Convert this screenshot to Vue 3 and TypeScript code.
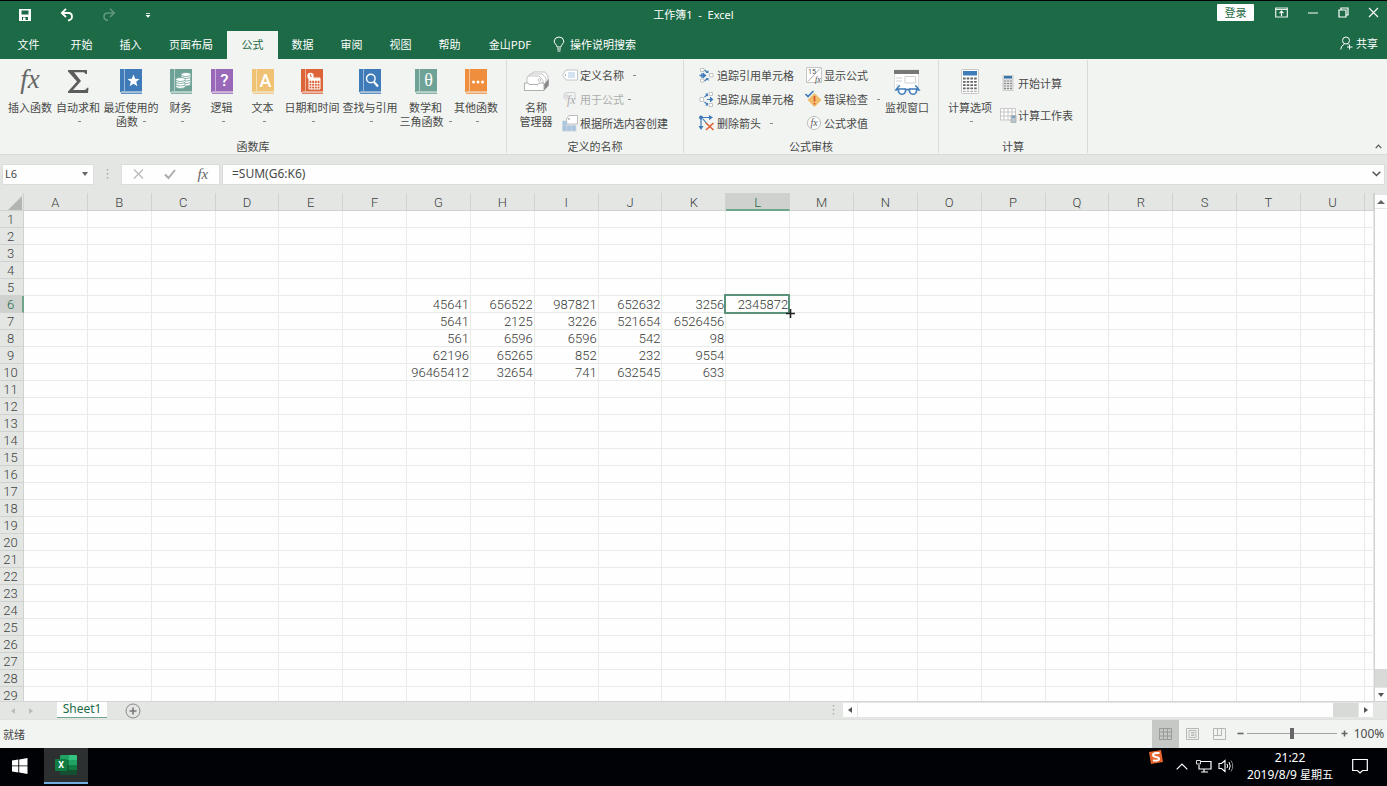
<script setup lang="ts">
import { ref } from 'vue'

interface BigButton {
  label: string[]
  icon: string
  size: string
  menu?: boolean
}

interface SmallButton {
  label: string
  icon: string
  menu?: boolean
  disabled?: boolean
}

const book = (color: string, inner: string): string =>
  `<path d="M0 0H22V22.5H2Q0 22.5 0 24Z" fill="${color}"/><path d="M4.5 0V22" stroke="#fff" stroke-opacity=".6" stroke-width=".8"/><path d="M1 24.2H22" stroke="${color}" stroke-width="1.2"/>${inner}`

const glyph = (ch: string, size: number, y: number, family = 'Roboto, sans-serif', weight = 500): string =>
  `<text x="13.5" y="${y}" text-anchor="middle" font-family="${family}" font-size="${size}" font-weight="${weight}" fill="#fff">${ch}</text>`

const serif = "'Liberation Serif', serif"

const bigIcons: Record<string, string> = {
  fx: `<text x="11" y="19" text-anchor="middle" font-family="${serif}" font-style="italic" font-size="27" fill="#666">fx</text>`,
  sigma: `<path d="M1 1H20V5H18.5Q18.300 3.200 16 3.200H7L14 12L6 21H17Q19.500 21 20 18.800H21.500L21 24H1V22.500L10 12.500L1 2.500Z" fill="#5c5c5c"/>`,
  recent: book('#3f7bb8', '<path d="M13.5 5.500L15.200 9.800L19.500 10L16.200 12.800L17.400 17.200L13.500 14.700L9.600 17.200L10.800 12.800L7.500 10L11.800 9.800Z" fill="#fff"/>'),
  money: book('#6fa296', '<g fill="#fff" stroke="#6fa296" stroke-width=".8"><ellipse cx="16" cy="15" rx="4.800" ry="2"/><ellipse cx="16" cy="12.500" rx="4.800" ry="2"/><ellipse cx="16" cy="10" rx="4.800" ry="2"/><ellipse cx="16" cy="7.500" rx="4.800" ry="2"/><ellipse cx="16" cy="5.500" rx="4.800" ry="2"/><ellipse cx="10.500" cy="17.500" rx="4.800" ry="2"/><ellipse cx="10.500" cy="15" rx="4.800" ry="2"/><ellipse cx="10.500" cy="12.500" rx="4.800" ry="2"/><ellipse cx="10.500" cy="10.500" rx="4.800" ry="2"/></g>'),
  logic: book('#9a68b8', glyph('?', 17, 17)),
  text: book('#f0c274', glyph('A', 18, 18)),
  date: book('#dd6438', '<path d="M8 9H19V20H8Z" fill="none" stroke="#fff"/><path d="M8 10.500H19" stroke="#fff" stroke-width="2.500"/><path d="M8 14.500H19M8 17.200H19M10.700 11V20M13.500 11V20M16.200 11V20" stroke="#fff" stroke-width=".8"/><circle cx="9.500" cy="7" r="3.200" fill="#fff"/><path d="M9.500 5V7.200H11.200" fill="none" stroke="#dd6438" stroke-width=".9"/>'),
  lookup: book('#3f7bb8', '<circle cx="11.800" cy="9.500" r="4.300" fill="none" stroke="#fff" stroke-width="1.400"/><path d="M15 13L19 17.500" stroke="#fff" stroke-width="2.200"/>'),
  math: book('#6fa296', glyph('θ', 18, 17, serif, 400)),
  other: book('#ef8f3e', '<circle cx="8.500" cy="13" r="1.500" fill="#fff"/><circle cx="13" cy="13" r="1.500" fill="#fff"/><circle cx="17.500" cy="13" r="1.500" fill="#fff"/>'),
  names: '<g fill="#fff" stroke="#b4b4b4" stroke-width=".8"><path d="M7 10V5Q7 3 9 3H20L23 7V15L19 20"/><path d="M4 12V7Q4 5 6 5H17L21 9V16"/><path d="M2 15V9Q2 7 4 7H14L18 11V16"/><circle cx="14.500" cy="11" r="1.300"/></g><path d="M-.5 14H3L4 15.500H13L14 14H19V21.500H-.5Z" fill="#fff" stroke="#a6a6a6" stroke-width=".9"/><path d="M19.300 15L23.700 10V16.500L19.300 21.500Z" fill="#888"/>',
  watch: '<path d="M-1.500 1H22.500V20H-1.500Z" fill="#fff" stroke="#d6d6d6" stroke-width=".8"/><path d="M-2 1H23V5H-2Z" fill="#777"/><path d="M0 9H6M0 12H6M9 7.500H19.500V14H9ZM0 16H3" fill="none" stroke="#d0d0d0"/><g fill="#fff" stroke="#3f7bb8" stroke-width="1.500"><path d="M2.500 20H9.500Q10 25.200 6 25.200Q2 25.200 2.500 20ZM13.500 20H20.500Q21 25.200 17 25.200Q13 25.200 13.500 20Z"/><path d="M9.500 21Q11.500 19.800 13.500 21M2.500 20.500L0 21L2 18L4 16.500M20.500 20.500L23 21L21 18L19 16.500" fill="none"/></g>',
  calc: '<rect x="2.500" y=".5" width="17" height="24" rx="1" fill="#fff" stroke="#c6c6c6"/><path d="M4 2H18V6.500H4Z" fill="#3f7bb8"/><g stroke="#666" stroke-width="1.800" stroke-dasharray="2.600 1.100"><path d="M4 9.500H18M4 12.800H18M4 16.100H18M4 19.400H18"/></g><path d="M4 22.300H18" stroke="#999" stroke-dasharray="2.600 1.100"/>'
}

const smallIcons: Record<string, string> = {
  tag: '<path d="M4 3H15.500V13H4L.5 8Z" fill="#fff" stroke="#b8c0c6" stroke-width=".9"/><circle cx="3.500" cy="8" r=".8" fill="#999"/><path d="M6 6H13M6 8H13M6 10H13" stroke="#a9c8e4"/>',
  usefx: '<path d="M2 7V4Q2 1.500 5 1.500H13V8M2 7L5 9" fill="none" stroke="#d0cdd4"/><circle cx="5" cy="5" r="1.300" fill="none" stroke="#ccc"/><text x="5" y="13" font-family="Liberation Serif, serif" font-style="italic" font-size="12" fill="#aaa">fx</text>',
  create: '<path d="M4.500 4L7 .5H15.500V9H4.500Z" fill="#fff" stroke="#b5b5b5" stroke-width=".9"/><circle cx="7" cy="4" r=".9" fill="#aaa"/><path d="M.5 6H5V16H.5ZM5 10.500H14V16H5Z" fill="#a9c4de"/><path d="M.5 6H5V16H.5ZM5 10.500H14V16H5M.5 10.500H5M9.500 10.500V16" fill="none" stroke="#c8d4de" stroke-width=".8"/>',
  precedents: '<g fill="#fff" stroke="#c0c4c4"><path d="M1.500 1.500H5V4.500H1.500ZM1.500 12H5V15H1.500ZM10.500 6.500H14V10H10.500Z"/></g><path d="M.5 8.500H5M3 6V11M5.500 3L8 5M5.500 14L8 12" stroke="#3f7bb8" stroke-width="1.300"/><path d="M4 5.500L7.500 8.500L4 11.500ZM6.500 6H9.500V3ZM6.500 11H9.500V14Z" fill="#3f7bb8"/>',
  dependents: '<g fill="#fff" stroke="#c0c4c4"><path d="M1 6.500H4.500V10.500H1ZM10 1.500H13.500V4.500H10ZM10 12.500H13.500V15.500H10Z"/></g><path d="M8 8.500H14M11.500 6V11M5.500 6L8 4M5.500 11L8 13" stroke="#3f7bb8" stroke-width="1.200"/><path d="M11.500 6L14.500 8.500L11.500 11ZM6 2.500H9V5.500ZM6 14.500H9V11.500Z" fill="#3f7bb8"/>',
  removearrows: '<path d="M2 2V13M2 2.500H12M4 4L8 9" stroke="#3f7bb8" stroke-width="1.200"/><circle cx="2" cy="2.500" r="2" fill="#3f7bb8"/><path d="M10 0L14 2.500L10 5ZM-.5 11H4.500L2 15Z" fill="#3f7bb8"/><path d="M7 8L14.500 15M14.500 8L7 15" stroke="#dd6438" stroke-width="1.700"/>',
  showfx: '<path d="M.5 .5H15.500V15.500H.5Z" fill="#fff" stroke="#c4c4c4"/><path d="M2 14.500L14 1.500" stroke="#aaa"/><text x="2" y="7" font-family="Roboto, sans-serif" font-size="7" fill="#555">15</text><text x="9" y="15" font-family="Liberation Serif, serif" font-style="italic" font-size="8" fill="#444">fx</text>',
  errorcheck: '<path d="M8.500 2L15.500 9L8.500 16L1.500 9Z" fill="#f0bd6a"/><path d="M8.500 5V10.500M8.500 12V13.500" stroke="#d8552b" stroke-width="1.700"/><path d="M-.5 3L2 5.500L7.500 0" fill="none" stroke="#3f7bb8" stroke-width="1.700"/>',
  evalfx: '<circle cx="8" cy="8" r="6.500" fill="#fff" stroke="#bbb"/><text x="8" y="11" text-anchor="middle" font-family="Liberation Serif, serif" font-style="italic" font-size="10" fill="#555">fx</text>',
  calcnow: '<path d="M3 .5H13V15.500H3Z" fill="#ddd" stroke="#ccc"/><path d="M4 1H12V3.500H4Z" fill="#3577a8"/><path d="M4 6H12M4 8.500H12M4 11H12M4 13.500H12" stroke="#888" stroke-width="1.200" stroke-dasharray="2 1"/>',
  calcsheet: '<path d="M.5 1.500H15.500V13H.5ZM.5 5H15.500M.5 9H15.500M4 1.500V13M8 1.500V13M12 1.500V13" fill="#fff" stroke="#c6c6c6"/><path d="M11 8.500H16V15.500H11Z" fill="#b8c6d0" stroke="#aaa" stroke-width=".8"/><path d="M12 10H15" stroke="#3f7bb8"/>'
}

const tabs = ['开始', '插入', '页面布局', '公式', '数据', '审阅', '视图', '帮助', '金山PDF']
const activeTab = ref('公式')

const library: BigButton[] = [
  { label: ['插入函数'], icon: 'fx', size: 'm' },
  { label: ['自动求和'], icon: 'sigma', size: 'm', menu: true },
  { label: ['最近使用的', '函数'], icon: 'recent', size: 'l', menu: true },
  { label: ['财务'], icon: 'money', size: 's', menu: true },
  { label: ['逻辑'], icon: 'logic', size: 's', menu: true },
  { label: ['文本'], icon: 'text', size: 's', menu: true },
  { label: ['日期和时间'], icon: 'date', size: 'l', menu: true },
  { label: ['查找与引用'], icon: 'lookup', size: 'l', menu: true },
  { label: ['数学和', '三角函数'], icon: 'math', size: 'ml', menu: true },
  { label: ['其他函数'], icon: 'other', size: 'm', menu: true }
]

const naming: SmallButton[] = [
  { label: '定义名称', icon: 'tag', menu: true },
  { label: '用于公式', icon: 'usefx', menu: true, disabled: true },
  { label: '根据所选内容创建', icon: 'create' }
]
const tracing: SmallButton[] = [
  { label: '追踪引用单元格', icon: 'precedents' },
  { label: '追踪从属单元格', icon: 'dependents' },
  { label: '删除箭头', icon: 'removearrows', menu: true }
]
const checking: SmallButton[] = [
  { label: '显示公式', icon: 'showfx' },
  { label: '错误检查', icon: 'errorcheck', menu: true },
  { label: '公式求值', icon: 'evalfx' }
]
const calculating: SmallButton[] = [
  { label: '开始计算', icon: 'calcnow' },
  { label: '计算工作表', icon: 'calcsheet' }
]

const columns = 'ABCDEFGHIJKLMNOPQRSTU'.split('')
const values: Record<number, Record<string, number>> = {
  6: { G: 45641, H: 656522, I: 987821, J: 652632, K: 3256, L: 2345872 },
  7: { G: 5641, H: 2125, I: 3226, J: 521654, K: 6526456 },
  8: { G: 561, H: 6596, I: 6596, J: 542, K: 98 },
  9: { G: 62196, H: 65265, I: 852, J: 232, K: 9554 },
  10: { G: 96465412, H: 32654, I: 741, J: 632545, K: 633 }
}
const active = { col: 'L', row: 6 }
const nameBox = ref('L6')
const formula = ref('=SUM(G6:K6)')
const zoom = ref(50)
</script>

<template>
  <div class="desktop">
    <header class="head">
      <div class="titlebar">
        <div class="quick">
          <button aria-label="保存"><svg width="14" height="14" viewBox="0 0 14 14"><path fill-rule="evenodd" d="M1 1H13V13H1ZM3.500 2.500V6.500H10.500V2.500ZM4 9V12H10V9Z" fill="#fff"/><path d="M5 9.500H7.500V12.500H5Z" fill="#fff"/></svg></button>
          <button aria-label="撤消"><svg width="14" height="14" viewBox="0 0 14 14"><path d="M2 5H8.500Q12 5.200 12 8.500Q12 12 8 12.500" fill="none" stroke="#fff" stroke-width="1.800"/><path d="M6 .8L1.800 5L6 9" fill="none" stroke="#fff" stroke-width="1.800"/></svg></button>
          <button class="faded" aria-label="恢复"><svg width="14" height="14" viewBox="0 0 14 14"><path d="M12 5H5.500Q2 5.200 2 8.500Q2 12 6 12.500" fill="none" stroke="#fff" stroke-width="1.600"/><path d="M8 .8L12.200 5L8 9" fill="none" stroke="#fff" stroke-width="1.600"/></svg></button>
          <button class="narrow" aria-label="自定义快速访问工具栏"><svg width="6" height="5" viewBox="0 0 6 5"><path d="M1 .5H5" stroke="#fff" stroke-width=".8"/><path d="M.5 2H5.500L3 4.800Z" fill="#fff"/></svg></button>
        </div>
        <h1 class="title">工作簿1&nbsp; -&nbsp; Excel</h1>
        <div class="window">
          <button class="login">登录</button>
          <button aria-label="功能区显示选项"><svg width="13" height="11" viewBox="0 0 13 11"><path d="M.7 1H12.300V10H.7ZM.7 2.500H12.300" fill="none" stroke="#e8f2ec" stroke-width="1.200"/><path d="M6.500 9V4.500M4.500 6.200L6.500 4.200L8.500 6.200" fill="none" stroke="#fff" stroke-width="1.200"/></svg></button>
          <button aria-label="最小化"><svg width="10" height="11" viewBox="0 0 10 11"><path d="M0 6H10" stroke="#fff"/></svg></button>
          <button aria-label="还原"><svg width="11" height="11" viewBox="0 0 11 11"><path d="M1 3H8V10H1ZM3 3V1H10V8H8" fill="none" stroke="#fff" stroke-width="1.200"/></svg></button>
          <button class="close" aria-label="关闭"><svg width="11" height="11" viewBox="0 0 11 11"><path d="M1 1L10 10M10 1L1 10" stroke="#fff" stroke-width="1.100"/></svg></button>
        </div>
      </div>
      <nav class="tabs">
        <button class="tab file">文件</button>
        <button v-for="t in tabs" :key="t" class="tab" :class="{ on: t === activeTab, wide: t.length > 2 }" @click="activeTab = t">{{ t }}</button>
        <button class="tell"><svg width="12" height="16" viewBox="0 0 12 16"><path d="M4 11Q4 9.500 2.500 8Q1 6.500 1.200 5Q1.600 1 6 1Q10.400 1 10.800 5Q11 6.500 9.500 8Q8 9.500 8 11ZM4 13H8M4.500 15H7.500" fill="none" stroke="#fff"/></svg>操作说明搜索</button>
        <button class="share"><svg width="13" height="14" viewBox="0 0 13 14"><circle cx="6" cy="4.500" r="3.500" fill="none" stroke="#fff"/><path d="M.7 13.500Q1 9.500 4.500 8M7.500 8L8.500 8.500M9.500 8.500V13.500M7 11H12.500" fill="none" stroke="#fff"/></svg>共享</button>
      </nav>
    </header>

    <section class="ribbon">
      <div class="group library">
        <div class="tools">
          <button v-for="b in library" :key="b.icon" class="big" :class="b.size">
            <svg width="22" height="25" viewBox="0 0 22 25" v-html="bigIcons[b.icon]" />
            <span v-for="(l, i) in b.label" :key="l">{{ l }}<i v-if="i === 1" class="caret" /></span>
            <span v-if="b.menu && b.label.length === 1"><i class="caret alone" /></span>
          </button>
        </div>
        <h2>函数库</h2>
      </div>
      <div class="group naming">
        <div class="tools">
          <button class="big m"><svg width="22" height="25" viewBox="0 0 22 25" v-html="bigIcons.names" /><span>名称</span><span>管理器</span></button>
          <div class="stack">
            <button v-for="b in naming" :key="b.icon" class="small" :disabled="b.disabled"><svg width="16" height="16" viewBox="0 0 16 16" v-html="smallIcons[b.icon]" />{{ b.label }}<i v-if="b.menu" class="caret" /></button>
          </div>
        </div>
        <h2>定义的名称</h2>
      </div>
      <div class="group auditing">
        <div class="tools">
          <div class="stack">
            <button v-for="b in tracing" :key="b.icon" class="small"><svg width="16" height="16" viewBox="0 0 16 16" v-html="smallIcons[b.icon]" />{{ b.label }}<i v-if="b.menu" class="caret" /></button>
          </div>
          <div class="stack checks">
            <button v-for="b in checking" :key="b.icon" class="small"><svg width="16" height="16" viewBox="0 0 16 16" v-html="smallIcons[b.icon]" />{{ b.label }}<i v-if="b.menu" class="caret" /></button>
          </div>
          <button class="big m"><svg width="22" height="25" viewBox="0 0 22 25" v-html="bigIcons.watch" /><span>监视窗口</span></button>
        </div>
        <h2>公式审核</h2>
      </div>
      <div class="group calc">
        <div class="tools">
          <button class="big m"><svg width="22" height="25" viewBox="0 0 22 25" v-html="bigIcons.calc" /><span>计算选项</span><span><i class="caret alone" /></span></button>
          <div class="stack pair">
            <button v-for="b in calculating" :key="b.icon" class="small"><svg width="16" height="16" viewBox="0 0 16 16" v-html="smallIcons[b.icon]" />{{ b.label }}</button>
          </div>
        </div>
        <h2>计算</h2>
      </div>
      <button class="collapse" aria-label="折叠功能区"><svg width="7" height="5" viewBox="0 0 7 5"><path d="M.7 4.200L3.500 1.200L6.300 4.200" fill="none" stroke="#555" stroke-width="1.200"/></svg></button>
    </section>

    <section class="formulabar">
      <div class="namebox">
        <input v-model="nameBox" aria-label="名称框" />
        <button aria-label="名称列表"><svg width="6" height="4" viewBox="0 0 6 4"><path d="M0 0H6L3 4Z" fill="#666"/></svg></button>
      </div>
      <svg class="grip" width="3" height="12" viewBox="0 0 3 12"><path d="M1.500 1V11" stroke="#aaa" stroke-width="1.500" stroke-dasharray="1.500 2.500"/></svg>
      <div class="actions">
        <button aria-label="取消"><svg width="11" height="10" viewBox="0 0 11 10"><path d="M1 .5L10 9.500M10 .5L1 9.500" stroke="#bbb" stroke-width="1.400"/></svg></button>
        <button aria-label="输入"><svg width="12" height="10" viewBox="0 0 12 10"><path d="M1 5.500L4.500 9L11 1" fill="none" stroke="#aaa" stroke-width="1.900"/></svg></button>
        <button class="fx" aria-label="插入函数">fx</button>
      </div>
      <div class="formula">
        <input v-model="formula" aria-label="编辑栏" />
        <button aria-label="展开编辑栏"><svg width="9" height="6" viewBox="0 0 9 6"><path d="M.7 .8L4.500 4.500L8.300 .8" fill="none" stroke="#555" stroke-width="1.600"/></svg></button>
      </div>
    </section>

    <main class="sheet">
      <div class="cells">
        <table>
          <colgroup><col class="rowcol" /><col v-for="c in columns" :key="c" /><col class="rest" /></colgroup>
          <thead>
            <tr>
              <th class="corner"><svg width="14" height="14" viewBox="0 0 14 14"><path d="M14 0V14H0Z" fill="#b2b5b2"/></svg></th>
              <th v-for="c in columns" :key="c" scope="col" :class="{ on: c === active.col }">{{ c }}</th>
              <th></th>
            </tr>
          </thead>
          <tbody>
            <tr v-for="r in 29" :key="r">
              <th scope="row" :class="{ on: r === active.row }">{{ r }}</th>
              <td v-for="c in columns" :key="c" :class="{ active: c === active.col && r === active.row }">{{ values[r]?.[c] }}<svg v-if="c === active.col && r === active.row" class="cross" width="9" height="9" viewBox="0 0 9 9"><path d="M4.500 0V9M0 4.500H9" stroke="#222" stroke-width="1.600"/></svg></td>
              <td></td>
            </tr>
          </tbody>
        </table>
      </div>
      <div class="vscroll">
        <button aria-label="向上滚动"><svg width="8" height="4" viewBox="0 0 8 4"><path d="M0 4H8L4 0Z" fill="#666"/></svg></button>
        <div class="track"><div class="thumb"></div></div>
        <button aria-label="向下滚动"><svg width="6" height="4" viewBox="0 0 6 4"><path d="M0 0H6L3 4Z" fill="#555"/></svg></button>
      </div>
    </main>

    <section class="sheetbar">
      <button class="step" aria-label="上一个"><svg width="4" height="6" viewBox="0 0 4 6"><path d="M4 0V6L0 3Z" fill="#bbb"/></svg></button>
      <button class="step" aria-label="下一个"><svg width="4" height="6" viewBox="0 0 4 6"><path d="M0 0V6L4 3Z" fill="#bbb"/></svg></button>
      <button class="sheettab">Sheet1</button>
      <button class="add" aria-label="新工作表"><svg width="16" height="16" viewBox="0 0 16 16"><circle cx="8" cy="8" r="7" fill="none" stroke="#888"/><path d="M8 4.500V11.500M4.500 8H11.500" stroke="#777" stroke-width="1.600"/></svg></button>
      <div class="hscroll">
        <svg class="grip" width="3" height="12" viewBox="0 0 3 12"><path d="M1.500 1V11" stroke="#aaa" stroke-width="1.500" stroke-dasharray="1.500 2.500"/></svg>
        <button aria-label="向左滚动"><svg width="4" height="6" viewBox="0 0 4 6"><path d="M4 0V6L0 3Z" fill="#555"/></svg></button>
        <div class="track"><div class="thumb"></div></div>
        <button aria-label="向右滚动"><svg width="4" height="6" viewBox="0 0 4 6"><path d="M0 0V6L4 3Z" fill="#555"/></svg></button>
      </div>
    </section>

    <footer class="status">
      <span class="ready">就绪</span>
      <button class="view on" aria-label="普通"><svg width="13" height="12" viewBox="0 0 13 12"><path d="M.5 .5H12.500V11.500H.5ZM.5 4H12.500M.5 8H12.500M4.500 .5V11.500M8.500 .5V11.500" fill="none" stroke="#989b98"/></svg></button>
      <button class="view" aria-label="页面布局"><svg width="13" height="12" viewBox="0 0 13 12"><path d="M.5 .5H12.500V11.500H.5ZM3 2.500H10V9.500H3ZM5 4.500H8.500M5 6H8.500M5 7.500H8.500" fill="none" stroke="#b4b7b4"/></svg></button>
      <button class="view" aria-label="分页预览"><svg width="13" height="12" viewBox="0 0 13 12"><path d="M.5 .5H12.500V11.500H.5ZM.5 7.500H8.500V.5M4.500 .5V7.500" fill="none" stroke="#b4b7b4"/></svg></button>
      <button class="zoombtn" aria-label="缩小"><svg width="7" height="7" viewBox="0 0 7 7"><path d="M.5 3.500H6.500" stroke="#666" stroke-width="1.600"/></svg></button>
      <input v-model="zoom" class="zoom" type="range" min="0" max="100" aria-label="缩放" />
      <button class="zoombtn" aria-label="放大"><svg width="7" height="7" viewBox="0 0 7 7"><path d="M.5 3.500H6.500M3.500 .5V6.500" stroke="#666" stroke-width="1.600"/></svg></button>
      <button class="percent">100%</button>
    </footer>

    <footer class="taskbar">
      <button class="task" aria-label="开始"><svg width="16" height="16" viewBox="0 0 16 16"><path d="M0 2.500L6.300 1.500V7.500H0ZM7.200 1.400L15.500 0V7.500H7.200ZM0 8.300H6.300V14.400L0 13.500ZM7.200 8.300H15.500V16L7.200 14.600Z" fill="#fff"/></svg></button>
      <button class="task running" aria-label="Excel"><svg width="22" height="20" viewBox="0 0 22 20"><path d="M6 0H14V5H5V1Z" fill="#21a366"/><path d="M14 0H21Q22 0 22 1V5H14Z" fill="#33c481"/><path d="M5 5H14V10H5Z" fill="#107c41"/><path d="M14 5H22V10H14Z" fill="#21a366"/><path d="M5 10H14V15H5Z" fill="#185c37"/><path d="M14 10H22V15H14Z" fill="#107c41"/><path d="M5 15H22V19Q22 20 21 20H6Q5 20 5 19Z" fill="#134f30"/><rect x="0" y="4" width="12" height="12" rx="1" fill="#107c41"/><text x="6" y="13" text-anchor="middle" font-family="Roboto, sans-serif" font-size="9" font-weight="700" fill="#fff">X</text></svg></button>
      <div class="tray">
        <svg class="sogou" width="14" height="14" viewBox="0 0 14 14"><path d="M0 2L12 0L14 12L2 14Z" fill="#e8642c"/><path d="M10.500 3Q4 2.500 4 5Q4 6.500 7 7Q10.500 7.500 10 9.500Q9.500 11 4 10.500" fill="none" stroke="#fff" stroke-width="2"/></svg>
        <button aria-label="显示隐藏的图标"><svg width="12" height="7" viewBox="0 0 12 7"><path d="M.7 6.300L6 1L11.300 6.300" fill="none" stroke="#fff" stroke-width="1.200"/></svg></button>
        <button aria-label="网络"><svg width="16" height="13" viewBox="0 0 16 13"><path d="M4 1.500H15V9H3V5M8 9V12M5 12H12" fill="none" stroke="#fff" stroke-width="1.200"/><path d="M.5 .5H4.500V4H.5Z" fill="none" stroke="#ddd"/></svg></button>
        <button aria-label="音量"><svg width="16" height="14" viewBox="0 0 16 14"><path d="M1 4.500H3.500L7 1.500V12.500L3.500 9.500H1Z" fill="none" stroke="#fff" stroke-width="1.100"/><path d="M9 5Q10.300 7 9 9M11 3Q13.500 7 11 11" fill="none" stroke="#fff"/><path d="M13 1.500Q16.500 7 13 12.500" fill="none" stroke="#888"/></svg></button>
        <button class="clock"><span>21:22</span><span>2019/8/9 <span class="weekday">星期五</span></span></button>
        <button class="notes" aria-label="通知"><svg width="16" height="16" viewBox="0 0 16 16"><path d="M.7 1.500H15.300V12.500H10.500L8 15L5.500 12.500H.7Z" fill="none" stroke="#fff" stroke-width="1.200"/></svg></button>
      </div>
    </footer>
  </div>
</template>

<style>
body {
  margin: 0;
}
</style>

<style scoped>
.desktop {
  display: flex;
  flex-direction: column;
  height: 100vh;
  overflow: hidden;
  background: #e4e6e4;
  color: #484948;
  font: 11px/14px 'Noto Sans CJK SC', sans-serif;
}
*, *::before, *::after { box-sizing: border-box; }
button, input {
  margin: 0;
  padding: 0;
  border: 0;
  background: none;
  color: inherit;
  font: inherit;
}
button {
  display: flex;
  align-items: center;
  justify-content: center;
  white-space: nowrap;
}
svg { display: block; flex: none; overflow: visible; }
h1, h2 { margin: 0; font-size: 11px; font-weight: 400; }

.head { flex: none; border-top: 1px solid #000; background: #1d6a46; color: #fff; }
.titlebar { display: grid; grid-template-columns: 1fr auto 1fr; height: 30px; }
.quick { display: flex; padding-left: 4px; }
.quick button { width: 42px; height: 28px; }
.quick .narrow { width: 36px; }
.faded { opacity: .3; }
.title { font-family: 'Noto Sans', 'Noto Sans CJK SC', sans-serif; line-height: 28px; }
.window { display: flex; justify-content: flex-end; align-items: flex-start; }
.window button { width: 31px; height: 23px; }
.window .close { width: 28px; }
.window .login { width: 37px; height: 17px; margin: 3px 12px 0 0; padding-bottom: 2px; border-radius: 1px; background: #fff; color: #1d6a46; }
.tabs { display: flex; height: 28px; }
.tab { width: 49px; padding-bottom: 2px; }
.tab.file { width: 57px; }
.tab.wide { width: 72px; }
.tab.on { width: 51px; background: #f2f4f2; color: #1d6a46; }
.tell { gap: 5px; margin-left: 7px; padding-bottom: 2px; }
.share { gap: 3px; margin: 0 9px 4px auto; }

.ribbon { display: flex; flex: none; height: 96px; border-bottom: 1px solid #d8dad8; background: #f2f4f2; }
.group { display: flex; flex-direction: column; margin: 1px 0; border-right: 1px solid #d9dbd9; }
.group h2 { line-height: 14px; text-align: center; }
.tools { display: flex; height: 79px; }
.library .tools { padding: 0 6px; }
.naming .tools { padding: 0 15px 0 5px; }
.auditing .tools { padding: 0 7px 0 13px; }
.calc .tools { padding: 0 14px 0 7px; }
.big { flex-direction: column; justify-content: flex-start; padding-top: 9px; }
.big svg { margin-bottom: 6px; }
.big span { display: flex; align-items: center; height: 14px; }
.big.s { width: 41px; }
.big.m { width: 48px; }
.big.ml { width: 53px; }
.big.l { width: 58px; }
.caret { width: 3px; height: 1px; margin-left: 5px; background: #888; }
.caret.alone { margin-left: 3px; }
.stack { display: flex; flex-direction: column; padding: 3px 0 0 2px; }
.small { justify-content: flex-start; gap: 2px; height: 24px; }
.small .caret { margin-left: 7px; }
.small:disabled { color: #acaeac; }
.small:disabled .caret { margin-left: 2px; }
.checks { margin: 0 3px 0 10px; }
.pair { gap: 8px; padding: 11px 0 0 6px; }
.collapse { align-self: flex-end; width: 18px; height: 16px; margin-left: auto; }

.formulabar { display: flex; flex: none; align-items: center; height: 38px; padding: 0 2px; font: 12px/18px 'Noto Sans', 'Noto Sans CJK SC', sans-serif; }
.namebox, .actions, .formula { display: flex; height: 21px; border: 1px solid #dbdddb; background: #fdfefd; }
.namebox { width: 92px; padding-left: 2px; }
.namebox input { flex: 1; min-width: 0; font-size: 11px; }
.namebox button { width: 16px; }
.formulabar .grip { margin: 0 12px; }
.actions { width: 99px; }
.actions button { flex: 1; }
.actions .fx { color: #666; font: italic 15px/18px 'Liberation Serif', serif; }
.formula { flex: 1; margin-left: 2px; padding-left: 9px; }
.formula input { flex: 1; min-width: 0; }
.formula button { width: 16px; }

.sheet { display: flex; flex: 1; min-height: 0; }
.cells { flex: 1; min-width: 0; overflow: hidden; border-right: 1px solid #cfd1cf; }
table { width: 100%; border-spacing: 0; table-layout: fixed; font: 300 13px/14px Roboto, sans-serif; }
.rowcol { width: 24px; }
.rest { width: 9px; }
th, td { height: 17px; padding: 2px 0 0; border-right: 1px solid #e9ebe9; border-bottom: 1px solid #e9ebe9; }
th { background: #e4e6e4; color: #404240; font-weight: 300; text-align: center; }
thead th { height: 18px; border-color: #d0d2d0; }
tbody th { padding-right: 2px; border-color: #d0d2d0; }
th.on { background: #ced1ce; color: #1d6a46; }
thead th.on { border-bottom: 2px solid #6fa58b; line-height: 13px; }
tbody th.on { border-right: 2px solid #6fa58b; padding-right: 1px; }
.corner svg { margin-left: 8px; }
td { background: #fdfefd; color: #383a38; text-align: right; padding-right: 1px; }
.active { position: relative; }
.active::after { content: ''; position: absolute; inset: -2px -1px -2px -2px; border: 2px solid #5a9379; }
.cross { position: absolute; right: -6px; bottom: -6px; z-index: 1; }

.vscroll { display: flex; flex-direction: column; width: 12px; padding-top: 2px; }
.vscroll button { height: 13px; background: #fdfefd; }
.vscroll .track { display: flex; flex: 1; margin: 1px 0; background: #d8dad8; }
.vscroll .thumb { flex: 1; margin-bottom: 18px; background: #fdfefd; }

.sheetbar { display: flex; flex: none; height: 18px; border-top: 1px solid #d4d6d4; }
.step { width: 17px; }
.step:first-child { width: 22px; padding-left: 4px; }
.sheettab { width: 50px; height: 16px; margin-left: 18px; padding-bottom: 1px; border-bottom: 1px solid #6fa58b; background: #fdfefd; color: #1d6a46; font: 12px/14px 'Noto Sans', sans-serif; }
.add { width: 16px; margin-left: 18px; }
.hscroll { display: flex; align-items: center; width: 40%; height: 16px; margin-left: auto; padding-right: 14px; }
.hscroll .grip { margin-right: 8px; }
.hscroll button { width: 14px; height: 14px; background: #fdfefd; }
.hscroll .track { flex: 1; height: 14px; margin: 0 1px; background: #d8dad8; }
.hscroll .thumb { width: 95%; height: 14px; background: #fdfefd; }

.status { display: flex; flex: none; align-items: center; height: 29px; padding-bottom: 1px; border-top: 1px solid #dfe1df; background: #f2f4f2; }
.ready { margin: 0 auto 0 3px; }
.view { width: 27px; height: 28px; }
.view.on { background: #c5c8c5; }
.zoombtn { width: 14px; height: 20px; }
.zoom { width: 90px; height: 14px; appearance: none; background: linear-gradient(#a2a4a2, #a2a4a2) center / 100% 1px no-repeat; }
.zoom::-webkit-slider-thumb { width: 4px; height: 11px; appearance: none; background: #666; }
.percent { width: 36px; font: 12px/14px 'Noto Sans', sans-serif; }

.taskbar { display: flex; flex: none; height: 38px; padding-bottom: 2px; background: #000206; color: #fff; }
.task { width: 44px; }
.task:first-child { padding-right: 4px; }
.running { border-bottom: 2px solid #70aee0; background: #2d3031; }
.tray { display: flex; align-items: center; margin-left: auto; padding-right: 10px; }
.tray button { width: 22px; height: 30px; }
.sogou { align-self: flex-start; margin: 2px 8px 0 0; }
.tray .clock { flex-direction: column; width: 106px; height: 34px; font: 12px/17px 'Noto Sans', 'Noto Sans CJK SC', sans-serif; }
.weekday { font-size: 11px; }
.tray .notes { width: 34px; }
</style>
